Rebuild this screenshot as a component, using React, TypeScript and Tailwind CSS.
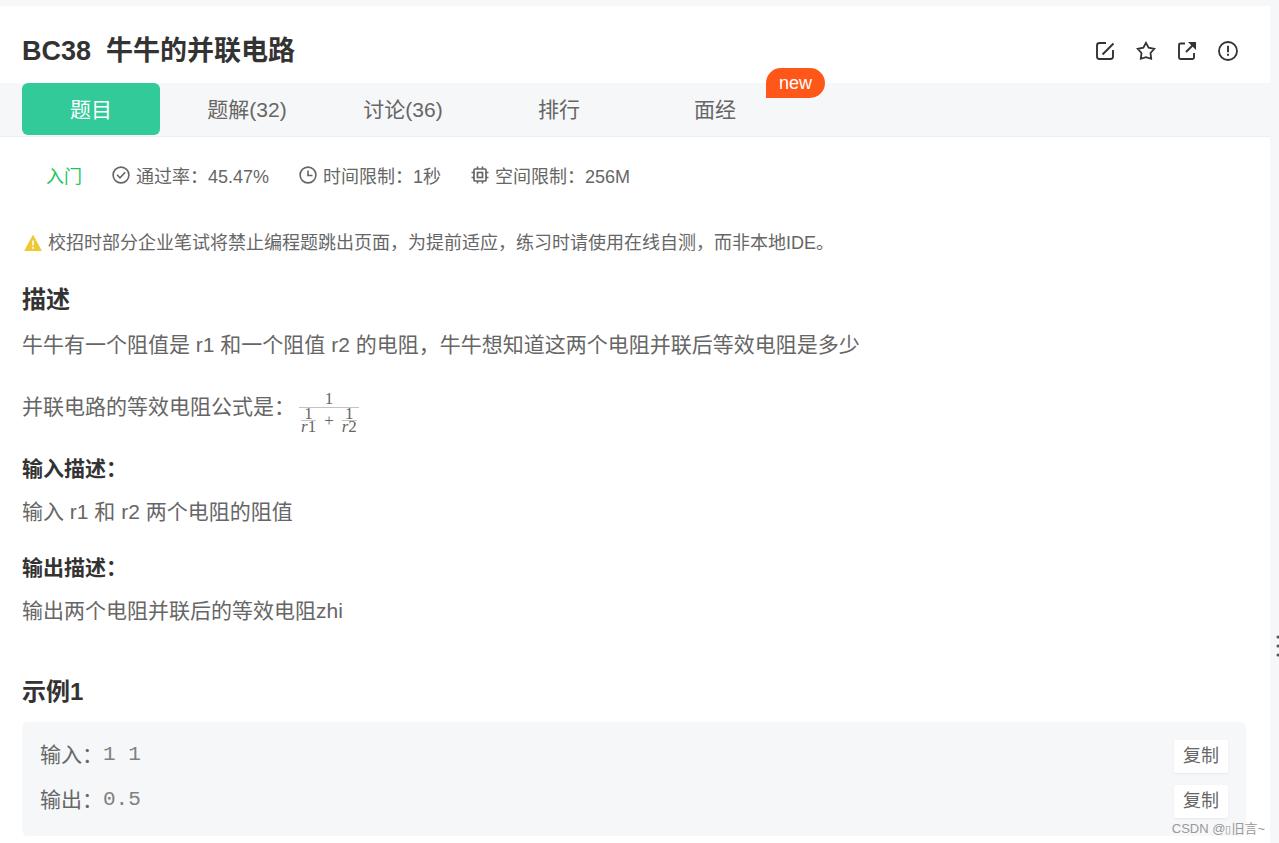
import React, { useState } from 'react';

interface Tab {
  id: string;
  label: string;
  badge?: string;
}

const tabs: Tab[] = [
  { id: 'problem', label: '题目' },
  { id: 'solution', label: '题解(32)' },
  { id: 'discuss', label: '讨论(36)' },
  { id: 'rank', label: '排行' },
  { id: 'interview', label: '面经', badge: 'new' },
];

const samples = [
  { label: '输入：', value: '1 1' },
  { label: '输出：', value: '0.5' },
];

const EditIcon = () => (
  <svg className="h-5 w-5" viewBox="0 0 20 20" fill="none" stroke="currentColor" strokeWidth="1.9">
    <path d="M11 2H4.5A2.5 2.5 0 0 0 2 4.5v11A2.5 2.5 0 0 0 4.5 18h11a2.5 2.5 0 0 0 2.5-2.5V9" />
    <path d="M7.5 13.5 18.5 2.5" />
  </svg>
);

const StarIcon = () => (
  <svg className="h-5 w-5" viewBox="0 0 20 20" fill="none" stroke="currentColor" strokeWidth="1.8">
    <path d="M10 1.800 12.600 6.700 18.300 7.800 14.500 12 15.200 17.800 10 16.200 4.800 17.800 5.500 12 1.700 7.800 7.400 6.700Z" />
  </svg>
);

const ShareIcon = () => (
  <svg className="h-5 w-5" viewBox="0 0 20 20" fill="none" stroke="currentColor" strokeWidth="1.9">
    <path d="M8 2.500H3.500A1.500 1.500 0 0 0 2 4v12.500A1.500 1.500 0 0 0 3.500 18h12a1.500 1.500 0 0 0 1.500-1.500V12" />
    <path d="M9 11 16 4" />
    <path d="M11 1h8v8Z" fill="currentColor" stroke="none" />
  </svg>
);

const ReportIcon = () => (
  <svg className="h-5 w-5" viewBox="0 0 20 20" fill="none" stroke="currentColor" strokeWidth="1.8">
    <circle cx="10" cy="10" r="9" />
    <path d="M10 4.800v6.400M10 12.800v2" strokeWidth="1.900" />
  </svg>
);

const PassIcon = () => (
  <svg className="h-[18px] w-[18px]" viewBox="0 0 18 18" fill="none" stroke="currentColor" strokeWidth="1.6">
    <circle cx="9" cy="9" r="7.900" />
    <path d="m5 8.800 3 3 5.200-5.500" />
  </svg>
);

const ClockIcon = () => (
  <svg className="h-[18px] w-[18px]" viewBox="0 0 18 18" fill="none" stroke="currentColor" strokeWidth="1.6">
    <circle cx="9" cy="9" r="7.900" />
    <path d="M9 4.500V9.500h4.500" />
  </svg>
);

const ChipIcon = () => (
  <svg className="h-[18px] w-[18px]" viewBox="0 0 18 18" fill="none" stroke="currentColor" strokeWidth="1.7">
    <rect x="3" y="3" width="12" height="12" rx="1" />
    <rect x="6.5" y="6.5" width="5" height="5" />
    <path d="M6.500 3V.5M11.500 3V.5M6.500 17.500V15M11.500 17.500V15M3 6.500H.5M3 11.500H.5M17.500 6.500H15M17.500 11.500H15" />
  </svg>
);

const WarningIcon = () => (
  <svg className="h-[18px] w-[18px]" viewBox="0 0 18 18">
    <path d="M9 1.500 17.200 16.500H.8Z" fill="#f0c832" stroke="#f0c832" strokeLinejoin="round" />
    <path d="M9 6.500v5M9 13v1.800" stroke="#fff" strokeWidth="1.6" />
  </svg>
);

const actions = [
  { name: '笔记', icon: <EditIcon /> },
  { name: '收藏', icon: <StarIcon /> },
  { name: '分享', icon: <ShareIcon /> },
  { name: '反馈', icon: <ReportIcon /> },
];

const limits = [
  { icon: <PassIcon />, text: '通过率：45.47%' },
  { icon: <ClockIcon />, text: '时间限制：1秒' },
  { icon: <ChipIcon />, text: '空间限制：256M' },
];

// 1 / rN, the small fraction used in the lower half of the formula
const Resistor = ({ index }: { index: number }) => (
  <span className="flex flex-col items-center">
    <span className="leading-3">1</span>
    <span className="h-px w-full bg-[#c4c4c4]" />
    <span className="leading-3">
      <i>r</i>
      {index}
    </span>
  </span>
);

const Formula = () => (
  <span className="inline-flex flex-col items-center font-['Liberation_Serif',serif] text-[17px]">
    <span className="leading-4">1</span>
    <span className="h-px w-full bg-[#c4c4c4]" />
    <span className="flex items-center px-0.5">
      <Resistor index={1} />
      <span className="px-2 leading-3">+</span>
      <Resistor index={2} />
    </span>
  </span>
);

export default function App() {
  const [activeTab, setActiveTab] = useState('problem');

  const handleCopy = (value: string) => {
    navigator.clipboard?.writeText(value);
  };

  return (
    <div className="relative flex min-h-screen bg-[#f6f7f9] pt-1.5 font-['Liberation_Sans','Noto_Sans_CJK_SC',sans-serif] text-[#666]">
      <main className="min-w-0 flex-1 bg-white">
        {/* Title */}
        <header className="flex items-center justify-between px-[22px] pt-[27px] pb-[14px] text-[#333]">
          <h1 className="text-[27px] leading-9 font-bold">BC38&nbsp;&nbsp;牛牛的并联电路</h1>
          <div className="flex">
            {actions.map((action) => (
              <button key={action.name} aria-label={action.name} className="flex w-[41px] justify-center">
                {action.icon}
              </button>
            ))}
          </div>
        </header>

        {/* Tabs */}
        <nav className="flex gap-[18px] border-b border-[#eceef0] bg-[#f6f7f9] pb-px pl-[22px]">
          {tabs.map((tab) => (
            <button
              key={tab.id}
              onClick={() => setActiveTab(tab.id)}
              className={`relative h-[52px] w-[138px] rounded-md pt-0.5 text-[21px] ${
                activeTab === tab.id ? 'bg-[#32ca99] text-white' : 'text-[#666]'
              }`}
            >
              {tab.label}
              {tab.badge && (
                <span className="absolute -top-[15px] left-[120px] rounded-full rounded-bl-none bg-[#ff5719] px-[13px] text-lg leading-[30px] text-white">
                  {tab.badge}
                </span>
              )}
            </button>
          ))}
        </nav>

        <div className="pr-6 pl-[22px]">
          {/* Limits */}
          <div className="flex gap-[30px] pt-[25px] pl-6 text-lg leading-[30px]">
            <span className="text-[#1fc35f]">入门</span>
            {limits.map((limit) => (
              <span key={limit.text} className="flex gap-1.5">
                <span className="pt-1">{limit.icon}</span>
                {limit.text}
              </span>
            ))}
          </div>

          <p className="mt-9 flex items-center gap-1.5 pl-0.5 text-lg leading-[30px]">
            <WarningIcon />
            校招时部分企业笔试将禁止编程题跳出页面，为提前适应，练习时请使用在线自测，而非本地IDE。
          </p>

          {/* Description */}
          <h2 className="mt-6 text-2xl leading-9 font-bold text-[#333]">描述</h2>
          <div className="mt-[11px] text-[21px] leading-8">
            <p>牛牛有一个阻值是 r1 和一个阻值 r2 的电阻，牛牛想知道这两个电阻并联后等效电阻是多少</p>
            <p className="mt-[30px] flex items-start gap-1">
              并联电路的等效电阻公式是：
              <Formula />
            </p>
          </div>

          <h3 className="mt-5 text-[21px] leading-8 font-bold text-[#333]">输入描述：</h3>
          <p className="mt-[11px] text-[21px] leading-8">输入 r1 和 r2 两个电阻的阻值</p>

          <h3 className="mt-6 text-[21px] leading-8 font-bold text-[#333]">输出描述：</h3>
          <p className="mt-[11px] text-[21px] leading-8">输出两个电阻并联后的等效电阻zhi</p>

          {/* Sample */}
          <h2 className="mt-[47px] text-2xl leading-9 font-bold text-[#333]">示例1</h2>
          <div className="mt-3 flex flex-col gap-3 rounded-md bg-[#f6f7f9] p-[18px]">
            {samples.map((sample) => (
              <div key={sample.label} className="flex items-start text-[21px] leading-[30px]">
                <span>{sample.label}</span>
                <pre className="font-['Liberation_Mono',monospace] text-[#808080]">{sample.value}</pre>
                <button
                  onClick={() => handleCopy(sample.value)}
                  className="ml-auto rounded-xs bg-white px-[9px] text-lg leading-[33px] shadow-sm shadow-black/5"
                >
                  复制
                </button>
              </div>
            ))}
          </div>
        </div>
      </main>

      {/* Splitter */}
      <aside className="flex w-[9px] flex-col overflow-hidden">
        <div className="grow-[17]" />
        <button aria-label="调整宽度" className="ml-1.5 w-6">
          <svg className="h-6 w-6" viewBox="0 0 24 24" fill="#555">
            <circle cx="2" cy="3" r="1.5" />
            <circle cx="2" cy="12" r="1.5" />
            <circle cx="2" cy="21" r="1.5" />
          </svg>
        </button>
        <div className="grow-[5]" />
      </aside>

      <span className="absolute right-3.5 bottom-1 text-[13px] leading-5 text-[#999]">
        CSDN @<span className="text-[11px]">▯</span>旧言~
      </span>
    </div>
  );
}
